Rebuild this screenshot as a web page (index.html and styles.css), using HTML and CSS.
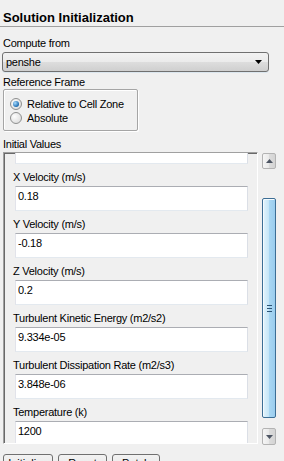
FILE: index.html
```html
<!DOCTYPE html>
<html lang="en">
<head>
  <meta charset="UTF-8">
  <meta name="viewport" content="width=device-width, initial-scale=1.0">
  <title>Solution Initialization</title>
  <link rel="stylesheet" href="styles.css">
</head>
<body>
  <div class="title">Solution Initialization</div>

  <div class="panel">
    <div class="caption first">Compute from</div>
    <div class="select">
      <span>penshe</span>
      <svg width="8" height="5" viewBox="0 0 8 5"><path d="M0 0h7L3.5 4z" fill="#000"/></svg>
    </div>

    <div class="caption ref">Reference Frame</div>
    <div class="group">
      <div class="radio"><span class="dot on"></span>Relative to Cell Zone</div>
      <div class="radio"><span class="dot"></span>Absolute</div>
    </div>

    <div class="caption init">Initial Values</div>
    <div class="values">
      <div class="scroll-view">
        <div class="fields">
          <input class="field-input partial" type="text" value="">

          <div class="field">
            <label>X Velocity (m/s)</label>
            <input class="field-input" type="text" value="0.18">
          </div>
          <div class="field">
            <label>Y Velocity (m/s)</label>
            <input class="field-input" type="text" value="-0.18">
          </div>
          <div class="field">
            <label>Z Velocity (m/s)</label>
            <input class="field-input" type="text" value="0.2">
          </div>
          <div class="field">
            <label>Turbulent Kinetic Energy (m2/s2)</label>
            <input class="field-input" type="text" value="9.334e-05">
          </div>
          <div class="field">
            <label>Turbulent Dissipation Rate (m2/s3)</label>
            <input class="field-input" type="text" value="3.848e-06">
          </div>
          <div class="field">
            <label>Temperature (k)</label>
            <input class="field-input" type="text" value="1200">
          </div>
        </div>
      </div>

      <div class="scrollbar">
        <div class="arrow-btn">
          <svg width="7" height="4" viewBox="0 0 7 4"><path d="M0 4h7L3.5 0z" fill="#4d5563"/></svg>
        </div>
        <div class="thumb">
          <span class="grip"></span>
        </div>
        <div class="arrow-btn down">
          <svg width="7" height="4" viewBox="0 0 7 4"><path d="M0 0h7L3.5 4z" fill="#4d5563"/></svg>
        </div>
      </div>
    </div>

    <div class="actions">
      <button class="btn w-init">Initialize</button>
      <button class="btn w-reset">Reset</button>
      <button class="btn w-patch">Patch</button>
    </div>
  </div>
</body>
</html>
```

FILE: styles.css
```css
body {
  margin: 0;
  background: #f0f0f0;
  color: #000;
  font-family: 'Liberation Sans', Arial, sans-serif;
  font-size: 11px;
  letter-spacing: -0.25px;
  overflow: hidden;
}
.title {
  padding: 10px 3px 0;
  line-height: 16px;
  font-size: 13px;
  font-weight: bold;
  letter-spacing: 0;
  border-bottom: 1px solid #a0a0a0;
}
.panel {
  padding: 0 0 0 3px;
}
.caption {
  line-height: 13px;
}
.caption.first {
  margin-top: 10px;
}
.caption.ref {
  margin-top: 4px;
}
.caption.init {
  margin-top: 7px;
}
.select {
  margin: 2px 0 0 -1px;
  width: 267px;
  height: 20px;
  box-sizing: border-box;
  border: 1px solid #707070;
  border-radius: 3px;
  background: linear-gradient(#f2f2f2, #ebebeb 50%, #dddddd 51%, #cfcfcf);
  display: flex;
  align-items: center;
  justify-content: space-between;
  padding: 0 5px 0 3px;
  box-shadow: 0 1px 0 #dbe6ee;
}
.select span {
  line-height: 13px;
}
.group {
  width: 135px;
  height: 42px;
  box-sizing: border-box;
  border: 1px solid #a5a5a5;
  border-radius: 2px;
  box-shadow: inset 1px 1px 0 #fff, 1px 1px 0 #fff;
  padding: 7px 0 0 6px;
}
.radio {
  display: flex;
  align-items: center;
  height: 14px;
}
.dot {
  width: 12px;
  height: 12px;
  box-sizing: border-box;
  border-radius: 50%;
  border: 1px solid #8e8f8f;
  background: radial-gradient(circle at 35% 35%, #fdfdfd, #d6d6d6);
  margin-right: 5px;
  display: flex;
  align-items: center;
  justify-content: center;
}
.dot.on::after {
  content: "";
  width: 6px;
  height: 6px;
  border-radius: 50%;
  background: radial-gradient(circle at 35% 35%, #a8dcff, #1e6cb0 70%, #0c4a85);
}
.values {
  margin-top: 1px;
  display: flex;
  align-items: flex-start;
  gap: 4px;
}
.scroll-view {
  width: 255px;
  height: 292px;
  box-sizing: border-box;
  border: 1px solid;
  border-color: #a0a0a0 #ffffff #ffffff #a0a0a0;
  box-shadow: inset 1px 1px 0 #696969;
  overflow: hidden;
}
.fields {
  padding-left: 1px;
}
.field label {
  display: block;
  padding: 6px 0 0 8px;
  line-height: 14px;
  margin-bottom: 2px;
}
.field-input {
  display: block;
  margin-left: 10px;
  width: 233px;
  height: 25px;
  box-sizing: border-box;
  border: 1px solid #abadb3;
  border-color: #abadb3 #dbdfe6 #e3e9ef #e2e3ea;
  background: #fff;
  padding: 1px 2px 7px;
  font-family: 'Liberation Sans', Arial, sans-serif;
  font-size: 11px;
  letter-spacing: -0.25px;
  line-height: 13px;
  color: #000;
  outline: none;
}
.field-input.partial {
  margin-top: -14px;
}
.scrollbar {
  margin-top: 1px;
  width: 14px;
  height: 292px;
  display: flex;
  flex-direction: column;
}
.arrow-btn {
  height: 16px;
  box-sizing: border-box;
  border: 1px solid #b3b3b3;
  border-radius: 2px;
  background: linear-gradient(to right, #f6f6f6, #e9e9e9 50%, #dcdcdc 51%, #d4d4d4);
  display: flex;
  align-items: center;
  justify-content: center;
}
.arrow-btn.down {
  height: 17px;
  margin-top: 10px;
}
.thumb {
  margin-top: 29px;
  height: 220px;
  box-sizing: border-box;
  border: 1px solid #3c6e95;
  border-radius: 2px;
  background: linear-gradient(to right, #e3f4fc, #c4e5f7 50%, #a9d7f3 51%, #9acdee);
  box-shadow: inset 1px 1px 0 #f4fbff;
  display: flex;
  align-items: center;
  justify-content: center;
}
.grip {
  width: 5px;
  height: 7px;
  background: repeating-linear-gradient(#2d5576 0 1px, transparent 1px 3px);
}
.actions {
  margin-top: 9px;
  display: flex;
  gap: 5px;
}
.btn {
  height: 22px;
  box-sizing: border-box;
  border: 1px solid #707070;
  border-radius: 3px;
  background: linear-gradient(#f2f2f2, #ebebeb 50%, #dddddd 51%, #cfcfcf);
  font-family: 'Liberation Sans', Arial, sans-serif;
  font-size: 11px;
  line-height: 13px;
  color: #000;
  padding: 0 0 4px;
}
.w-init {
  width: 50px;
}
.w-reset {
  width: 49px;
}
.w-patch {
  width: 48px;
}
```
